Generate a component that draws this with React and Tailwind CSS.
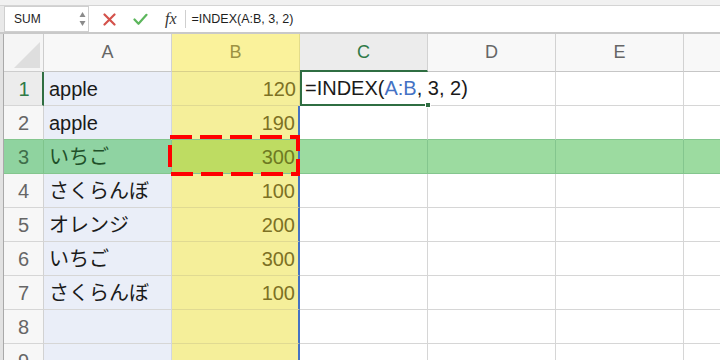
const ROWS = [
  { n: 1, a: 'apple', b: '120' },
  { n: 2, a: 'apple', b: '190' },
  { n: 3, a: 'いちご', b: '300' },
  { n: 4, a: 'さくらんぼ', b: '100' },
  { n: 5, a: 'オレンジ', b: '200' },
  { n: 6, a: 'いちご', b: '300' },
  { n: 7, a: 'さくらんぼ', b: '100' },
  { n: 8, a: '', b: '' },
  { n: 9, a: '', b: '' },
]

function FormulaBar() {
  return (
    <div className="flex h-[28px] items-center border-b-2 border-[#c9c9c9] bg-white">
      <div className="h-full w-[4px] bg-[#e9e9e9]" />
      <div className="flex h-[26px] w-[85px] items-center justify-between border border-[#cfcfcf] bg-white pl-[9px] pr-[2px]">
        <span className="text-[12px] text-[#222]">SUM</span>
        <svg width="7" height="16" viewBox="0 0 7 16">
          <path d="M3.5 1 L6.5 6 L0.5 6 Z" fill="#8a8a8a" />
          <path d="M3.5 15 L6.5 10 L0.5 10 Z" fill="#8a8a8a" />
        </svg>
      </div>
      <svg className="ml-[14px]" width="13" height="13" viewBox="0 0 13 13">
        <path d="M1.5 1.5 L11.5 11.5 M11.5 1.5 L1.5 11.5" stroke="#d4524b" strokeWidth="2.2" strokeLinecap="round" />
      </svg>
      <svg className="ml-[17px]" width="15" height="13" viewBox="0 0 15 13">
        <path d="M1.5 6.5 L5.5 10.8 L13.5 1.8" stroke="#5cb65c" strokeWidth="2.2" fill="none" strokeLinecap="round" strokeLinejoin="round" />
      </svg>
      <span className="ml-[17px] font-['Liberation_Serif',serif] text-[16px] italic text-[#333]">fx</span>
      <div className="ml-[8px] h-[18px] w-px bg-[#cfcfcf]" />
      <span className="ml-[6px] text-[12.5px] text-[#1e1e1e]">=INDEX(A:B, 3, 2)</span>
    </div>
  )
}

function HeaderRow() {
  return (
    <div className="flex h-[38px] text-[18px]">
      <div className="relative w-[40px] border-r border-b border-[#cdcdcd] bg-[#f5f5f5]">
        <svg className="absolute right-[3px] bottom-[3px]" width="26" height="26" viewBox="0 0 26 26">
          <path d="M26 0 L26 26 L0 26 Z" fill="#dedede" />
        </svg>
      </div>
      <div className="flex w-[128px] items-center justify-center border-r border-b border-[#d2d2d2] border-b-[#c6c6c6] bg-[#f8f8f8] text-[#666]">A</div>
      <div className="flex w-[128px] items-center justify-center border-r border-b border-[#e3dc8a] border-b-[#d8d08a] bg-[#faf29b] text-[#9d9242]">B</div>
      <div className="flex w-[128px] items-center justify-center border-r border-b-2 border-[#d2d2d2] border-b-[#2f6e42] bg-[#ececec] text-[#2f7a47]">C</div>
      <div className="flex w-[128px] items-center justify-center border-r border-b border-[#d2d2d2] border-b-[#c6c6c6] bg-[#f8f8f8] text-[#666]">D</div>
      <div className="flex w-[128px] items-center justify-center border-r border-b border-[#d2d2d2] border-b-[#c6c6c6] bg-[#f8f8f8] text-[#666]">E</div>
      <div className="flex-1 border-b border-[#c6c6c6] bg-[#f8f8f8]" />
    </div>
  )
}

function DataRow({ row }) {
  const isActive = row.n === 1
  const isBand = row.n === 3
  const greenBelow = row.n === 2 || row.n === 3
  const lineB = greenBelow ? 'border-b-[#84c68e]' : 'border-b-[#d6d6d6]'

  return (
    <div className="flex h-[34px] text-[20px]">
      <div
        className={
          isActive
            ? 'flex w-[40px] items-center justify-center border-r-2 border-b border-[#2f6e42] border-b-[#d6d6d6] bg-[#ececec] pl-[2px] text-[#2f7a47]'
            : isBand
              ? 'flex w-[40px] items-center justify-center border-r border-b border-[#7fc48c] border-b-[#84c68e] bg-[#8fd39f] text-[#3f6e4a]'
              : `flex w-[40px] items-center justify-center border-r border-b border-[#d2d2d2] ${lineB} bg-[#f7f7f7] text-[#666]`
        }
      >
        {row.n}
      </div>
      <div
        className={
          isBand
            ? 'flex w-[128px] items-center border-r border-b border-[#84c68e] bg-[#8fd3a2] pl-[5px] text-[#1f5029]'
            : `flex w-[128px] items-center border-r border-b border-[#d2d6e0] ${lineB} bg-[#eaeef8] pl-[5px] text-[#1a1a1a]`
        }
      >
        {row.a}
      </div>
      <div
        className={
          isActive
            ? 'flex w-[128px] items-center justify-end border-r border-b border-[#e3dc8a] border-b-[#e0da92] bg-[#f5ef9a] pr-[3px] text-[#7d7124]'
            : isBand
              ? 'flex w-[128px] items-center justify-end border-r-2 border-b border-[#4472c4] border-b-[#84c68e] bg-[#bedc62] pr-[3px] text-[#6e7a22]'
              : `flex w-[128px] items-center justify-end border-r-2 border-b border-[#4472c4] ${greenBelow ? 'border-b-[#84c68e]' : 'border-b-[#e0da92]'} bg-[#f5ef9a] pr-[3px] text-[#7d7124]`
        }
      >
        {row.b}
      </div>
      {isActive ? (
        <div className="relative flex w-[128px] items-center border-b-2 border-l-2 border-[#2f6e42] bg-white pl-[3px]">
          <span className="relative z-10 whitespace-nowrap text-[#1a1a1a]">
            =INDEX(<span className="text-[#4472c4]">A:B</span>, 3, 2)
          </span>
          <div className="absolute right-[-3px] bottom-[-4px] z-10 h-[6px] w-[6px] border border-white bg-[#2f6e42]" />
        </div>
      ) : (
        <div className={isBand ? 'w-[128px] border-r border-b border-[#84c68e] bg-[#9cdba0]' : `w-[128px] border-r border-b border-[#d6d6d6] ${lineB} bg-white`} />
      )}
      <div className={isBand ? 'w-[128px] border-r border-b border-[#84c68e] bg-[#9cdba0]' : `w-[128px] border-r border-b border-[#d6d6d6] ${lineB} bg-white`} />
      <div className={isBand ? 'w-[128px] border-r border-b border-[#84c68e] bg-[#9cdba0]' : `w-[128px] border-r border-b border-[#d6d6d6] ${lineB} bg-white`} />
      <div className={isBand ? 'flex-1 border-b border-[#84c68e] bg-[#9cdba0]' : `flex-1 border-b border-[#d6d6d6] ${lineB} bg-white`} />
    </div>
  )
}

export default function App() {
  return (
    <div className="relative h-[360px] w-[720px] overflow-hidden bg-white font-['Liberation_Sans','Noto_Sans_CJK_JP',sans-serif]">
      <div className="h-[6px] border-b border-[#d4d4d4] bg-[#f1f1f1]" />
      <FormulaBar />
      <div className="flex">
        <div className="w-[4px] border-r border-[#a9a9a9] bg-[#e2e2e2]" />
        <div className="flex-1">
          <HeaderRow />
          {ROWS.map((row) => (
            <DataRow key={row.n} row={row} />
          ))}
        </div>
      </div>
      <svg className="absolute top-[135px] left-[168px]" width="132" height="41" viewBox="0 0 132 41">
        <rect x="2" y="2" width="128" height="37" fill="none" stroke="#ff0000" strokeWidth="4" strokeDasharray="22 8" />
      </svg>
    </div>
  )
}
